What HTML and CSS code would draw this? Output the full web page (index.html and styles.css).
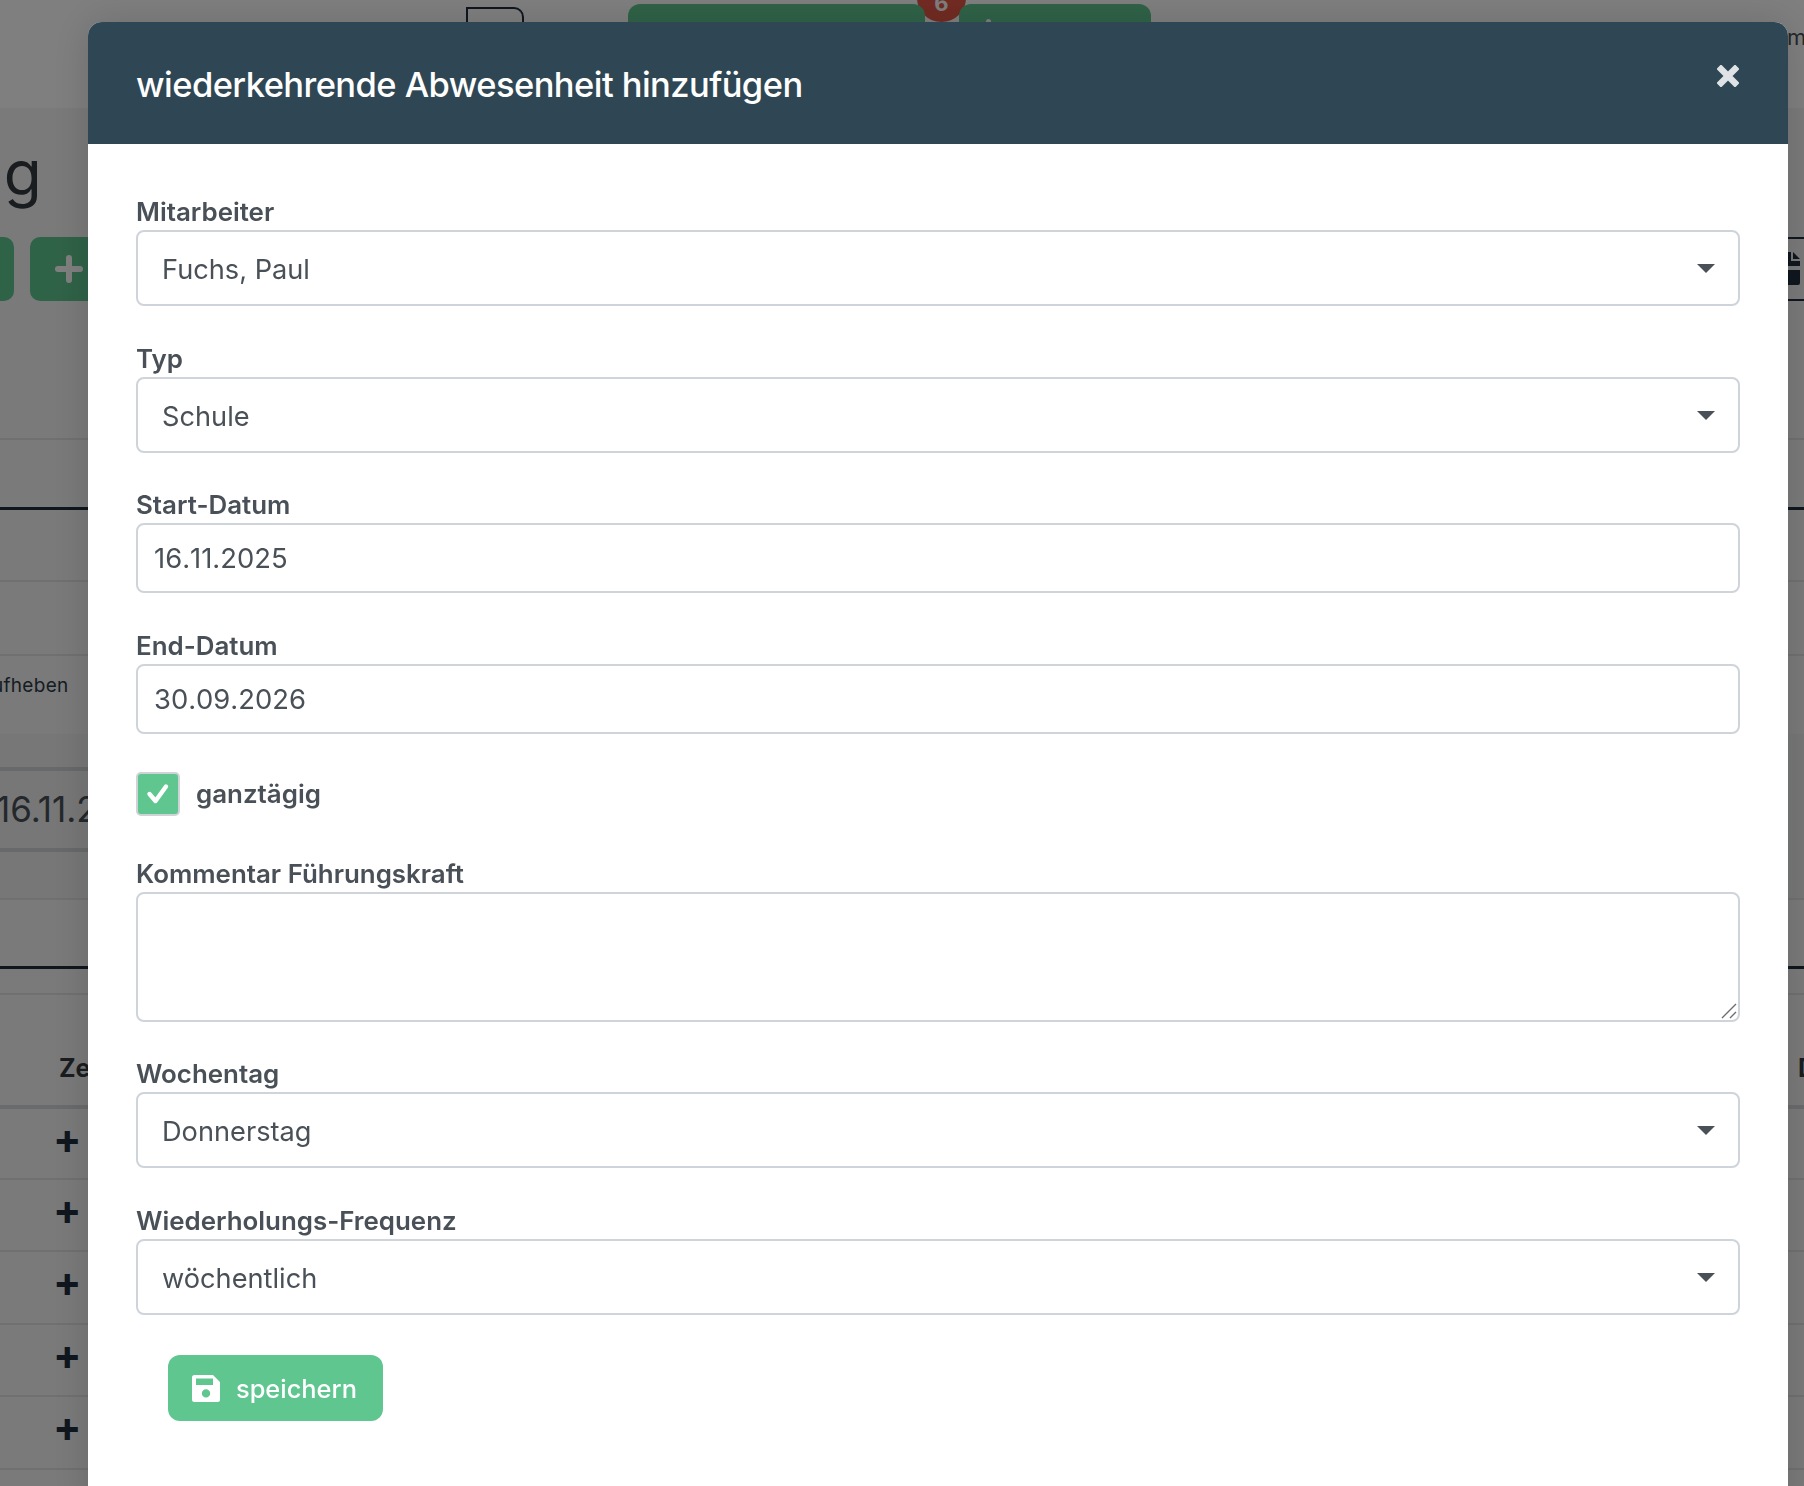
FILE: index.html

```html
<!DOCTYPE html>
<html lang="de">
<head>
  <meta charset="UTF-8" />
  <meta name="viewport" content="width=device-width, initial-scale=1.0"/>
  <title>wiederkehrende Abwesenheit hinzufügen</title>
  <link rel="stylesheet" href="styles.css">
</head>
<body>
  <div class="page">
    <div class="topbar">
      <span class="tab"></span>
      <span class="top-green top-green-a"></span>
      <span class="top-badge">6</span>
      <span class="top-green top-green-b"></span>
      <span class="top-word">m</span>
    </div>
    <div class="page-title">ng</div>
    <div class="page-btns">
      <div class="page-btns-left">
        <span class="page-btn"></span>
        <span class="page-btn page-btn-plus">
          <svg width="28" height="28" viewBox="0 0 28 28"><path d="M14 3 V25 M3 14 H25" stroke="#fff" stroke-width="6" stroke-linecap="round" fill="none"/></svg>
        </span>
      </div>
      <span class="page-btn-outline">
        <svg width="30" height="34" viewBox="0 0 30 34"><path fill="#1f2d3d" d="M2 0 H17 V9 H26 V14 H0 V2 A2 2 0 0 1 2 0 Z M19 0 L26 7 H19 Z M0 18 H26 V31 A2 2 0 0 1 24 33 H2 A2 2 0 0 1 0 31 Z"/></svg>
      </span>
    </div>
    <div class="band band-a"></div>
    <div class="band band-b"></div>
    <div class="band band-c"></div>
    <div class="band band-d"><span class="aufheben">aufheben</span></div>
    <div class="band band-e"><div class="old-date">16.11.2025</div></div>
    <div class="band band-f"></div>
    <div class="band band-g"></div>
    <div class="band band-h"><span class="head-cell">Ze</span><span class="head-cell head-cell-end">D</span></div>
    <div class="plus-row plus-row-first">+</div>
    <div class="plus-row">+</div>
    <div class="plus-row">+</div>
    <div class="plus-row">+</div>
    <div class="plus-row">+</div>
    <div class="plus-row"></div>
  </div>

  <div class="overlay"></div>

  <div class="modal">
    <div class="modal-header">
      <h2 class="modal-title">wiederkehrende Abwesenheit hinzufügen</h2>
      <button class="modal-close" type="button" aria-label="Schließen">
        <svg width="22" height="22" viewBox="0 0 22 22"><path d="M4 4 L18 18 M18 4 L4 18" stroke="#dfe3e5" stroke-width="6.5" stroke-linecap="square" fill="none"/></svg>
      </button>
    </div>
    <form class="modal-body">
      <div class="form-group">
        <label class="form-label">Mitarbeiter</label>
        <div class="select-box">Fuchs, Paul</div>
      </div>
      <div class="form-group form-group-tight">
        <label class="form-label">Typ</label>
        <div class="select-box">Schule</div>
      </div>
      <div class="form-group">
        <label class="form-label">Start-Datum</label>
        <input class="text-input" type="text" value="16.11.2025" />
      </div>
      <div class="form-group form-group-wide">
        <label class="form-label">End-Datum</label>
        <input class="text-input" type="text" value="30.09.2026" />
      </div>
      <div class="check-row">
        <span class="check-box">
          <svg width="24" height="24" viewBox="0 0 24 24"><path d="M3.5 12 L9.5 19 L20 4.5" stroke="#fff" stroke-width="4.4" stroke-linecap="round" stroke-linejoin="round" fill="none"/></svg>
        </span>
        <span class="check-label">ganztägig</span>
      </div>
      <div class="form-group form-group-tight">
        <label class="form-label">Kommentar Führungskraft</label>
        <div class="text-area-wrap">
          <textarea class="text-area"></textarea>
          <svg class="resize-grip" width="16" height="16" viewBox="0 0 16 16"><path d="M1 15 L15 1 M9 15 L15 9" stroke="#6d6d6d" stroke-width="1.4" fill="none"/></svg>
        </div>
      </div>
      <div class="form-group">
        <label class="form-label">Wochentag</label>
        <div class="select-box">Donnerstag</div>
      </div>
      <div class="form-group form-group-last">
        <label class="form-label">Wiederholungs-Frequenz</label>
        <div class="select-box">wöchentlich</div>
      </div>
      <button class="save-button" type="button">
        <svg width="28" height="27" viewBox="0 0 28 27"><path fill="#fff" fill-rule="evenodd" d="M2.5 0 H21 L28 7 V24.5 A2.5 2.5 0 0 1 25.5 27 H2.5 A2.5 2.5 0 0 1 0 24.5 V2.5 A2.5 2.5 0 0 1 2.5 0 Z M4 3.5 V10 H21 V3.5 Z M14 14.2 A4.2 4.2 0 1 0 14 22.6 A4.2 4.2 0 1 0 14 14.2 Z"/></svg>
        <span>speichern</span>
      </button>
    </form>
  </div>
</body>
</html>
```

FILE: styles.css

```css
* {
  box-sizing: border-box;
}
html,
body {
  margin: 0;
  height: 1486px;
  overflow: hidden;
}
body {
  font-family: Inter, "Liberation Sans", sans-serif;
  background-color: #f4f5f6;
  color: #495057;
}

/* page behind the dialog */
.topbar {
  position: relative;
  display: flex;
  align-items: flex-start;
  height: 108px;
  padding-left: 466px;
  background-color: #fff;
}
.tab {
  width: 58px;
  height: 40px;
  margin-top: 7px;
  margin-right: 104px;
  border: 2px solid #1f2d3d;
  border-bottom: none;
  border-radius: 0 10px 0 0;
}
.top-green {
  position: relative;
  height: 40px;
  margin-top: 4px;
  border-radius: 12px 12px 0 0;
  background-color: #5fc690;
}
.top-green-a {
  width: 297px;
}
.top-green-b {
  width: 192px;
  margin-left: -7px;
}
.top-green-b::before {
  content: "";
  position: absolute;
  left: 27px;
  top: 15px;
  width: 5px;
  height: 5px;
  border-radius: 50%;
  background-color: #fff;
}
.top-badge {
  flex-shrink: 0;
  width: 49px;
  height: 48px;
  margin-top: -26px;
  margin-left: -8px;
  border-radius: 50%;
  background-color: #e45745;
  color: #fff;
  font-size: 22px;
  font-weight: 700;
  text-align: center;
  line-height: 58px;
}
.top-word {
  position: absolute;
  left: 1787px;
  top: 24px;
  font-size: 22px;
  color: #495057;
}
.page-title {
  height: 129px;
  padding-top: 30px;
  margin-left: -33px;
  font-size: 62px;
  line-height: 70px;
  color: #343a40;
}
.page-btns {
  display: flex;
  justify-content: space-between;
  height: 64px;
  margin-right: -20px;
  margin-bottom: 137px;
}
.page-btns-left {
  display: flex;
  gap: 16px;
  margin-left: -40px;
}
.page-btn {
  display: flex;
  align-items: center;
  justify-content: center;
  width: 54px;
  border-radius: 10px;
  background-color: #5fc690;
}
.page-btn-plus {
  width: 84px;
  padding-right: 6px;
}
.page-btn-outline {
  display: flex;
  align-items: center;
  justify-content: center;
  width: 70px;
  border: 2px solid #1f2d3d;
  border-radius: 10px;
}
.band {
  border-top: 2px solid #dfe1e3;
}
.band-a {
  height: 69px;
}
.band-b {
  height: 73px;
  border-top: 3px solid #1f2d3d;
}
.band-c {
  height: 74px;
}
.band-d {
  height: 80px;
  padding-top: 18px;
}
.aufheben {
  display: block;
  margin-left: -19px;
  font-size: 19px;
  line-height: 23px;
  letter-spacing: 0.3px;
  color: #2c3a44;
}
.band-e {
  height: 164px;
  padding-top: 33px;
  border-top: none;
  background-color: #eeeff1;
}
.old-date {
  width: 400px;
  height: 85px;
  margin-left: -4px;
  border-top: 4px solid #cfd2d5;
  border-bottom: 4px solid #cfd2d5;
  font-size: 35px;
  line-height: 76px;
  color: #495057;
  white-space: nowrap;
}
.band-f {
  height: 68px;
}
.band-g {
  height: 27px;
  border-top: 3px solid #1f2d3d;
}
.band-h {
  display: flex;
  justify-content: space-between;
  height: 112px;
  padding: 59px 0 0 59px;
  margin-right: -12px;
}
.head-cell {
  font-size: 25px;
  font-weight: 700;
  line-height: 28px;
  color: #343a40;
}
.plus-row {
  height: 72.5px;
  border-top: 2px solid #dfe1e3;
  padding-left: 53px;
  font-size: 42px;
  font-weight: 700;
  line-height: 60px;
  color: #1f2d3d;
}
.plus-row-first {
  border-top: 4px solid #d4d6d9;
}

.overlay {
  position: fixed;
  inset: 0;
  background-color: rgba(0, 0, 0, 0.5);
}

/* dialog */
.modal {
  position: fixed;
  left: 88px;
  top: 22px;
  width: 1700px;
  height: 1490px;
  background-color: #fff;
  border-radius: 14px 14px 0 0;
  box-shadow: 0 0 40px rgba(0, 0, 0, 0.15);
}
.modal-header {
  position: relative;
  display: flex;
  align-items: center;
  height: 122px;
  padding: 2px 48px 0;
  border-radius: 14px 14px 0 0;
  background-color: #2f4754;
}
.modal-title {
  margin: 0;
  font-size: 34.5px;
  font-weight: 500;
  letter-spacing: -0.56px;
  color: #fff;
}
.modal-close {
  position: absolute;
  right: 49px;
  top: 43px;
  display: flex;
  padding: 0;
  border: none;
  background: none;
}
.modal-body {
  padding: 52px 48px 0;
}
.form-group {
  margin-bottom: 37px;
}
.form-group-tight {
  margin-bottom: 36px;
}
.form-group-wide {
  margin-bottom: 38px;
}
.form-group-last {
  margin-bottom: 40px;
}
.form-label {
  display: block;
  margin-bottom: 3px;
  font-size: 25.9px;
  font-weight: 600;
  line-height: 31px;
  color: #495057;
}
.select-box {
  position: relative;
  height: 76px;
  padding: 0 24px;
  border: 2px solid #ced4da;
  border-radius: 8px;
  font-size: 27.2px;
  line-height: 76px;
  color: #495057;
}
.select-box::after {
  content: "";
  position: absolute;
  right: 23px;
  top: 32px;
  border-left: 9px solid transparent;
  border-right: 9px solid transparent;
  border-top: 9px solid #495057;
}
.text-input {
  display: block;
  width: 100%;
  height: 70px;
  padding: 0 16px;
  border: 2px solid #ced4da;
  border-radius: 8px;
  font-family: inherit;
  font-size: 27.4px;
  font-kerning: none;
  color: #495057;
}
.check-row {
  display: flex;
  align-items: center;
  gap: 16px;
  margin-bottom: 42px;
}
.check-box {
  display: flex;
  align-items: center;
  justify-content: center;
  width: 44px;
  height: 44px;
  border: 2px solid #cfd3d6;
  border-radius: 5px;
  background-color: #5fc690;
}
.check-label {
  margin-top: -2px;
  font-size: 25.9px;
  font-weight: 600;
  color: #495057;
}
.text-area-wrap {
  position: relative;
}
.text-area {
  display: block;
  width: 100%;
  height: 130px;
  border: 2px solid #ced4da;
  border-radius: 8px;
  resize: none;
}
.resize-grip {
  position: absolute;
  right: 3px;
  bottom: 3px;
}
.save-button {
  display: flex;
  align-items: center;
  gap: 16px;
  width: 215px;
  height: 66px;
  margin-left: 32px;
  padding: 0 24px;
  border: none;
  border-radius: 12px;
  background-color: #5fc690;
  color: #fff;
  font-family: inherit;
  font-size: 25.4px;
  font-weight: 500;
}
```
